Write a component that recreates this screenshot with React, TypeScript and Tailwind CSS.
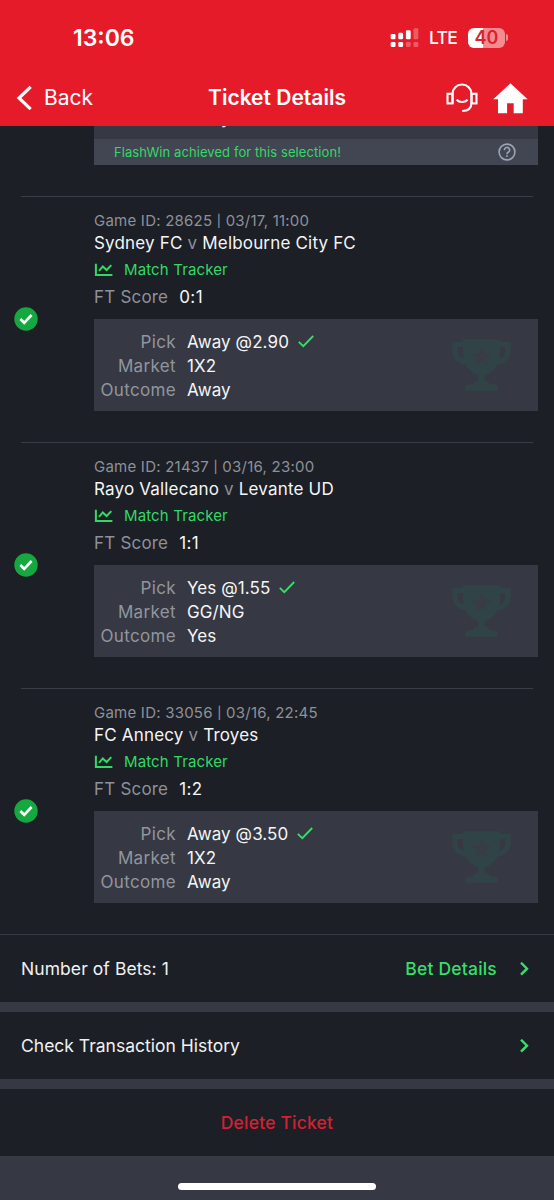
import React from "react";

type Selection = {
  id: string;
  date: string;
  home: string;
  away: string;
  score: string;
  pick: string;
  market: string;
  outcome: string;
};

const selections: Selection[] = [
  { id: "28625", date: "03/17, 11:00", home: "Sydney FC", away: "Melbourne City FC", score: "0:1", pick: "Away @2.90", market: "1X2", outcome: "Away" },
  { id: "21437", date: "03/16, 23:00", home: "Rayo Vallecano", away: "Levante UD", score: "1:1", pick: "Yes @1.55", market: "GG/NG", outcome: "Yes" },
  { id: "33056", date: "03/16, 22:45", home: "FC Annecy", away: "Troyes", score: "1:2", pick: "Away @3.50", market: "1X2", outcome: "Away" },
];

function SignalIcon() {
  return (
    <svg width="29" height="20" viewBox="0 0 29 20" fill="white">
      <rect x="0.7" y="6" width="4.8" height="5.2" rx="1.3" />
      <rect x="8.3" y="4.8" width="4.8" height="6.4" rx="1.3" />
      <rect x="15.9" y="2.3" width="4.8" height="8.9" rx="1.3" />
      <rect x="23.5" y="0.3" width="4.8" height="10.9" rx="1.3" opacity="0.28" />
      <rect x="0.7" y="14" width="4.8" height="5" rx="1.3" />
      <rect x="8.3" y="14" width="4.8" height="5" rx="1.3" />
      <rect x="15.9" y="14" width="4.8" height="5" rx="1.3" opacity="0.28" />
      <rect x="23.5" y="14" width="4.8" height="5" rx="1.3" opacity="0.28" />
    </svg>
  );
}

function Battery() {
  return (
    <div className="flex items-center">
      <div className="flex h-5 w-[37px] items-center justify-center overflow-hidden rounded-[6px] bg-[linear-gradient(90deg,#fff_0_40%,#f48b91_40%)] text-[18px] leading-5 font-semibold text-[#d8222f]">
        40
      </div>
      <div className="ml-px h-[7px] w-[2px] rounded-r-full bg-[#f48b91]" />
    </div>
  );
}

function HeadsetIcon() {
  return (
    <svg width="32" height="32" viewBox="0 0 32 32" fill="none" stroke="white" strokeWidth="2.1">
      <rect x="1.5" y="11.8" width="5" height="9.6" />
      <rect x="25.5" y="11.8" width="5" height="9.6" />
      <path d="M6.5 21.4V12A9.5 9.5 0 0 1 25.5 12V20.5C25.5 26 22 29 16.2 29" />
      <path d="M10.6 17.8C13.6 20.8 18.6 20.8 21.6 17.8" />
    </svg>
  );
}

function HomeIcon() {
  return (
    <svg width="35" height="31" viewBox="0 0 35 31" fill="white">
      <path d="M17.4 0.3L34.6 16.3H29.8V30.3H20.7V20.2H14.1V30.3H5V16.3H0.2Z" />
    </svg>
  );
}

function ChartIcon() {
  return (
    <svg width="19" height="14" viewBox="0 0 19 14" fill="none" stroke="#32d965" strokeWidth="2">
      <path d="M1.9 0.8V12.1H18.4" />
      <path d="M5 7.8L8.8 3.4L12.6 7L17.3 2.1" />
    </svg>
  );
}

function Trophy() {
  return (
    <svg width="60" height="54" viewBox="0 0 60 54">
      <g fill="none" stroke="#304447" strokeWidth="5">
        <path d="M14 6.5H4V13C4 20 9 23.5 17 24.5" />
        <path d="M47 6.5H57V13C57 20 52 23.5 44 24.5" />
      </g>
      <path
        fill="#304447"
        d="M12 1.5H49V14C49 26 43 34 33.5 37.5V43H36Q38 43 38 45V46.5H43Q46.5 46.5 46.5 49V52.5H14.5V49Q14.5 46.5 18 46.5H23V45Q23 43 25 43H27.5V37.5C18 34 12 26 12 14Z"
      />
      <path
        fill="#393b45"
        d="M30.5 9L27.9 15.8L21 16.2L26.4 20.6L24.6 27.4L30.5 23.5L36.4 27.4L34.6 20.6L40 16.2L33.1 15.8Z"
      />
    </svg>
  );
}

function WonBadge() {
  return (
    <svg width="24" height="24" viewBox="0 0 24 24" fill="none">
      <circle cx="12" cy="12" r="11.7" fill="#16a840" />
      <path d="M6.3 12L10.2 15.8L17.6 8" stroke="white" strokeWidth="2.6" />
    </svg>
  );
}

function Chevron() {
  return (
    <svg width="9" height="14" viewBox="0 0 9 14" fill="none" stroke="#35df68" strokeWidth="2.4">
      <path d="M1 0.7L7 6.7L1 12.7" />
    </svg>
  );
}

function Field({ label, value, won }: { label: string; value: string; won?: boolean }) {
  return (
    <div className="flex h-6 items-center text-[17px]">
      <span className="w-[82px] text-right tracking-[0.35px] text-[#92959d]">{label}</span>
      <span className="ml-[11px] tracking-[0.1px] text-[#f4f5f6]">{value}</span>
      {won && (
        <svg className="mb-[3px] ml-[9px]" width="16" height="13" viewBox="0 0 16 13" fill="none" stroke="#35df68" strokeWidth="1.8">
          <path d="M0.8 6.8L5.3 11.2L15.2 1" />
        </svg>
      )}
    </div>
  );
}

function SelectionCard({ s }: { s: Selection }) {
  return (
    <section className="flex h-[246px] flex-col">
      <div className="mr-[21px] ml-[21px] h-px shrink-0 bg-[#3a3d45]" />
      <div className="flex flex-1">
        <div className="flex w-[94px] items-center pb-[2px] pl-[14px]">
          <WonBadge />
        </div>
        <div className="w-[444px] pt-3">
          <div className="h-[22px] text-[15px] leading-[23px] tracking-[0.23px] text-[#8e9199]">
            Game ID: {s.id} <span className="align-[1px] text-[12px] font-medium">|</span> {s.date}
          </div>
          <div className="h-6 text-[17px] leading-6 tracking-[0.18px] text-[#f4f5f6]">
            {s.home} <span className="text-[#8e9199]">v</span> {s.away}
          </div>
          <div className="flex h-[30px] items-center gap-[11px] text-[15px] tracking-[0.13px] text-[#32d965]">
            <ChartIcon />
            Match Tracker
          </div>
          <div className="flex h-6 items-center gap-[11px] pt-[2px] text-[17px]">
            <span className="tracking-[0.2px] text-[#8e9199]">FT Score</span>
            <span className="tracking-[0.4px] text-[#f4f5f6]">{s.score}</span>
          </div>
          <div className="mt-[10px] flex h-[92px] items-center justify-between bg-[#363944] pr-[27px]">
            <div className="pt-1">
              <Field label="Pick" value={s.pick} won />
              <Field label="Market" value={s.market} />
              <Field label="Outcome" value={s.outcome} />
            </div>
            <Trophy />
          </div>
        </div>
      </div>
    </section>
  );
}

export default function App() {
  return (
    <div className="flex h-[1200px] w-[554px] flex-col overflow-hidden bg-[#1c1f26] font-['Inter',sans-serif]">
      <header className="h-[126px] shrink-0 bg-[#e61b29] text-white">
        <div className="flex h-[70px] items-center pt-[5px] pr-[46px] pl-[73px]">
          <span className="pt-[2px] text-[23px] font-semibold">13:06</span>
          <div className="ml-auto flex items-center">
            <SignalIcon />
            <span className="ml-[10px] w-[29px] pt-px text-[17.5px] font-medium tracking-[-0.7px]">LTE</span>
            <div className="ml-[10px]">
              <Battery />
            </div>
          </div>
        </div>
        <div className="grid h-[56px] grid-cols-[1fr_auto_1fr] items-center">
          <div className="flex items-center pl-4">
            <svg width="17" height="26" viewBox="0 0 17 26" fill="none" stroke="white" strokeWidth="3.2">
              <path d="M14.7 1.8L3 13L14.7 24.2" />
            </svg>
            <span className="ml-[11px] text-[21px]">Back</span>
          </div>
          <h1 className="text-[21px] font-semibold">Ticket Details</h1>
          <div className="flex items-center justify-end pr-[26px]">
            <HeadsetIcon />
            <div className="ml-[15px]">
              <HomeIcon />
            </div>
          </div>
        </div>
      </header>

      <main>
        <div className="ml-[94px] h-[70px] w-[444px]">
          <div className="relative h-[13px] overflow-hidden bg-[#363944]">
            <span className="absolute top-[-18px] left-[93px] text-[17px] leading-5 tracking-[0.1px] text-[#f4f5f6]">Away</span>
          </div>
          <div className="flex h-[26px] items-center justify-between bg-[#424653] pr-[22px] pl-5 text-[13px] tracking-[0.08px] text-[#32d965]">
            <span className="pt-[2px]">FlashWin achieved for this selection!</span>
            <svg width="18" height="18" viewBox="0 0 18 18" fill="none" stroke="#9da3b0" strokeWidth="1.6">
              <circle cx="9" cy="9" r="7.9" />
              <path d="M6.4 7.2A2.6 2.6 0 1 1 10.2 9.3Q9 10 9 11.2" />
              <path d="M9 12.3V13.9" />
            </svg>
          </div>
        </div>
        {selections.map((s) => (
          <SelectionCard key={s.id} s={s} />
        ))}
      </main>

      <footer className="flex flex-1 flex-col bg-[#363944] text-[17.5px] text-[#f0f1f3]">
        <div className="flex h-[68px] items-center border-t border-[#363944] bg-[#1c1f26] pr-[25px] pl-[21px]">
          <span className="pt-px tracking-[0.07px]">Number of Bets: 1</span>
          <span className="mr-[23px] ml-auto pt-px font-medium tracking-[0.2px] text-[#35df68]">Bet Details</span>
          <Chevron />
        </div>
        <div className="mt-[10px] flex h-[67px] items-center justify-between bg-[#1c1f26] pr-[25px] pl-[21px]">
          <span className="pt-px">Check Transaction History</span>
          <Chevron />
        </div>
        <div className="mt-[10px] flex h-[67px] items-center justify-center bg-[#1c1f26] pt-px font-medium tracking-[0.2px] text-[#d32133]">
          Delete Ticket
        </div>
        <div className="mx-auto mt-[27px] h-[7px] w-[198px] rounded-full bg-white" />
      </footer>
    </div>
  );
}
